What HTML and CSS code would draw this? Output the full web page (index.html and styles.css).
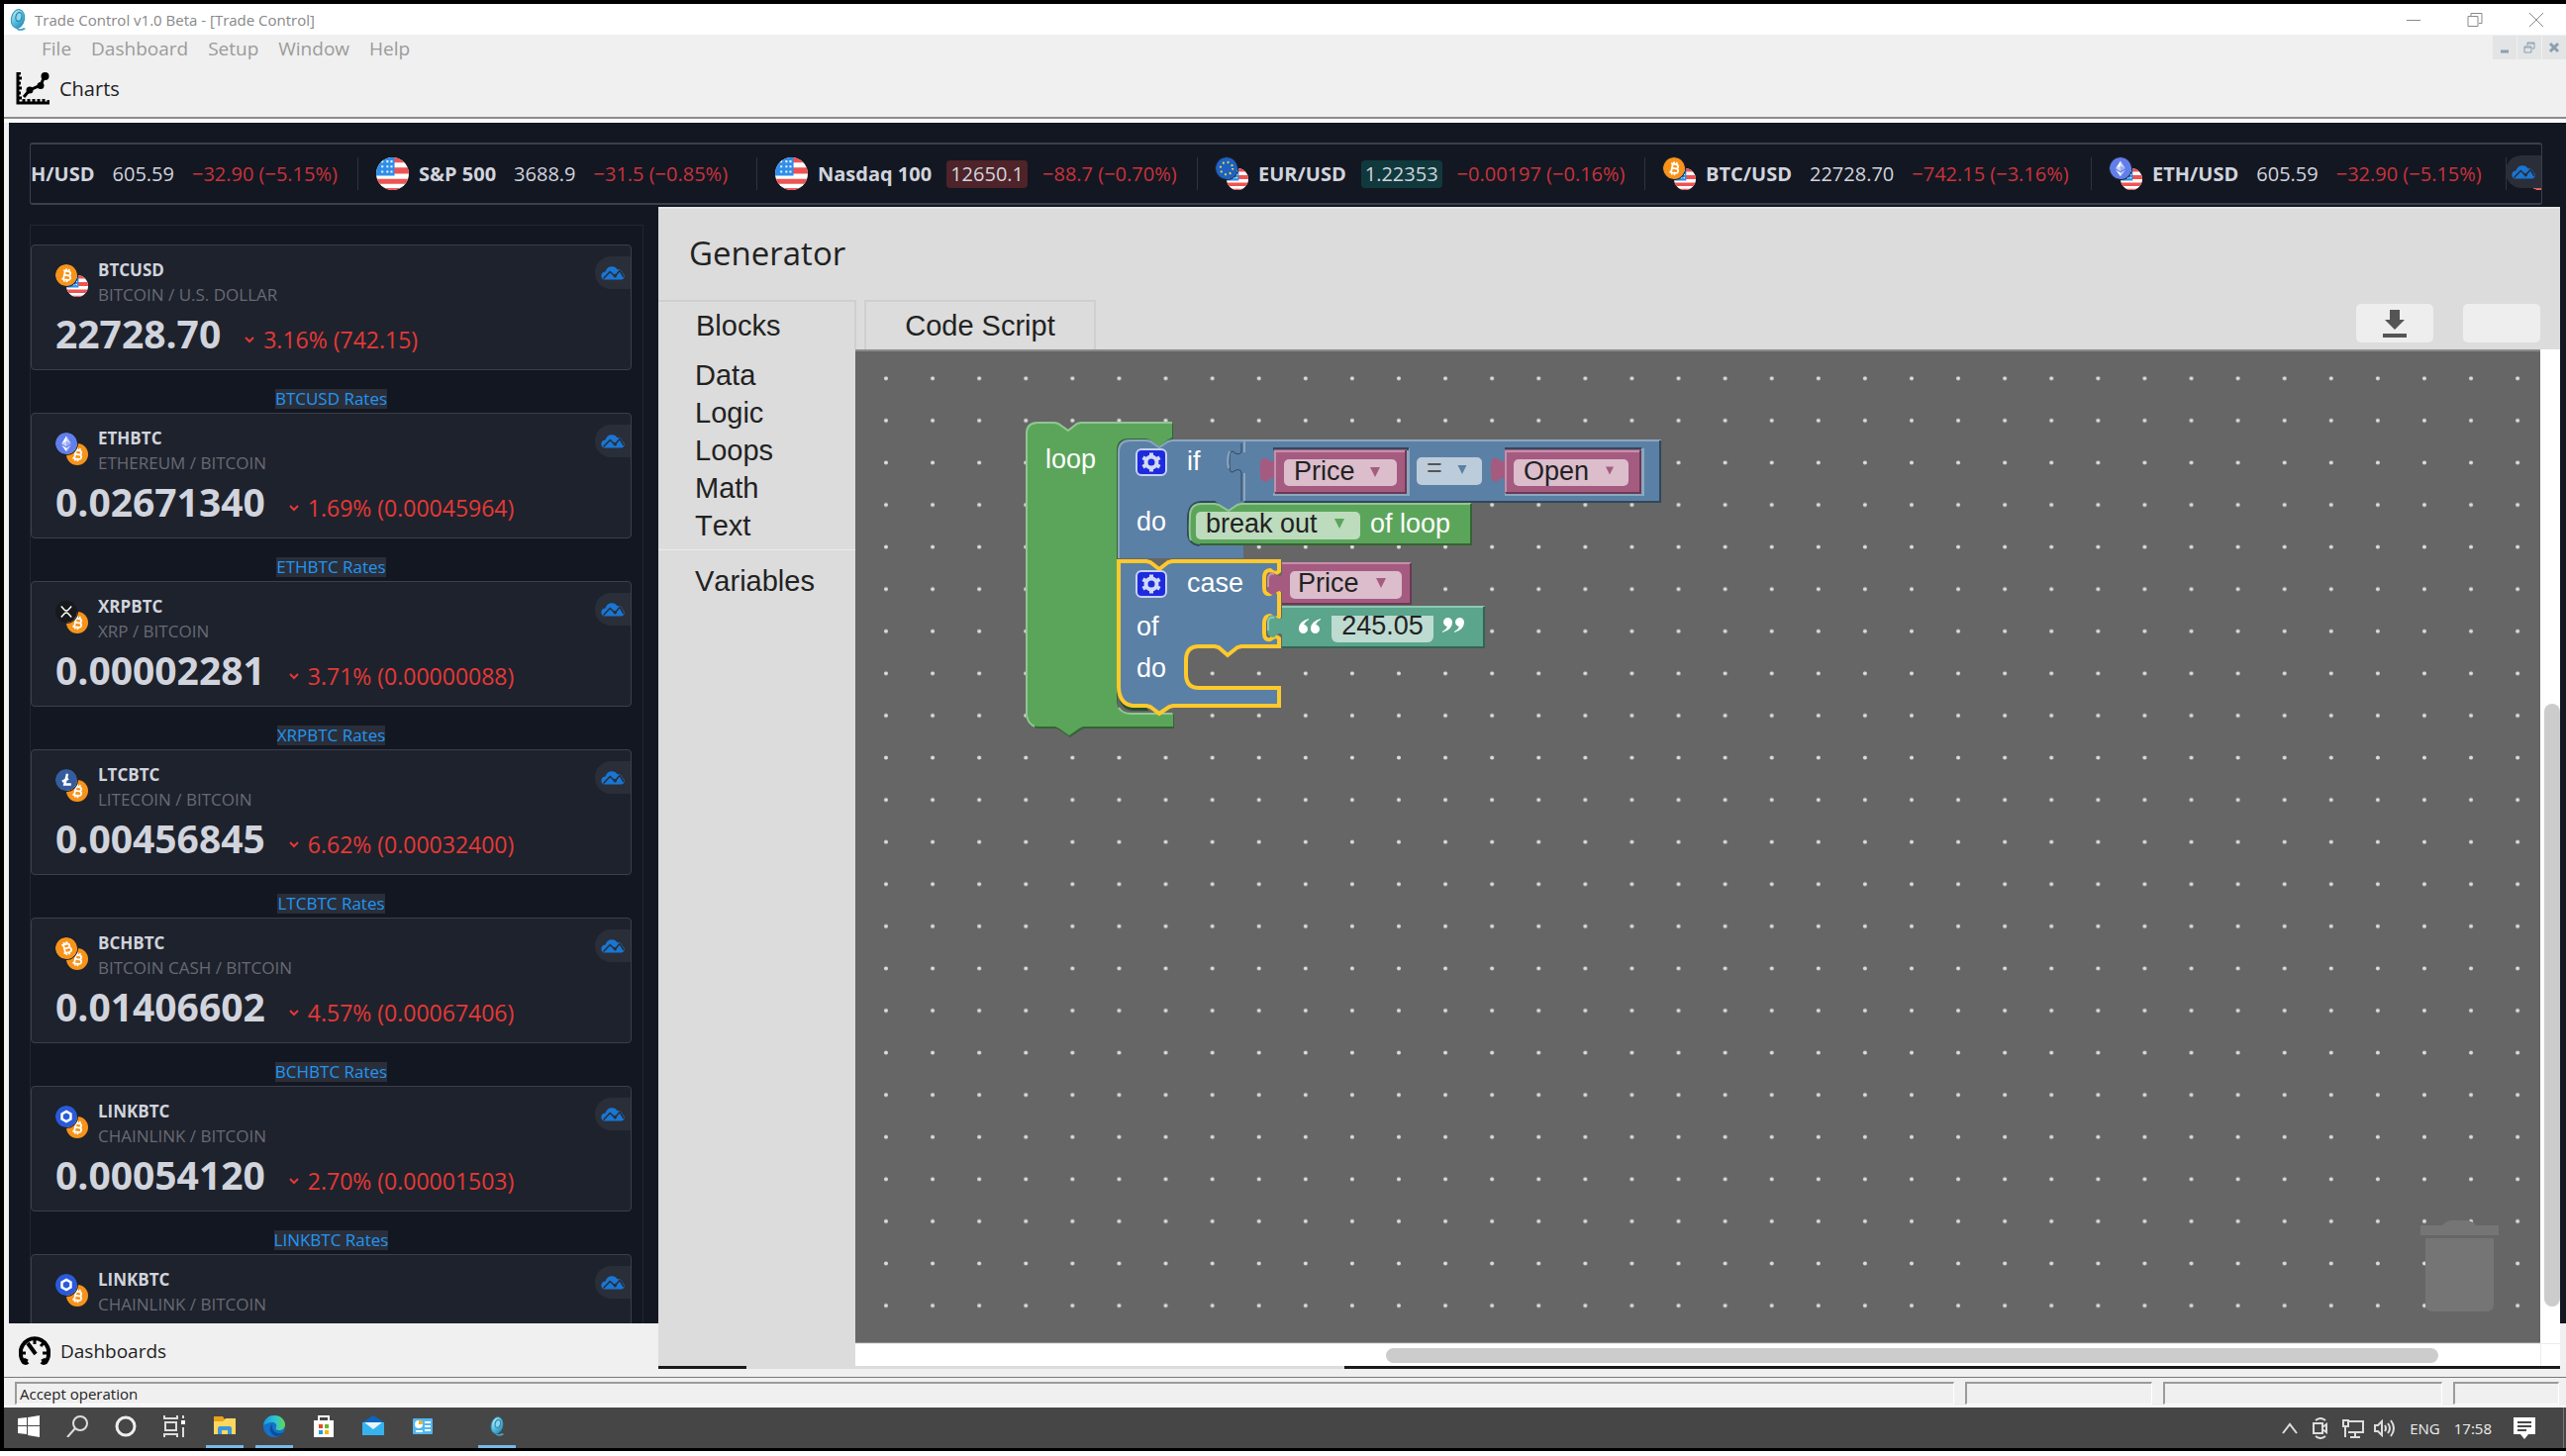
FILE: index.html
```html
<!DOCTYPE html>
<html lang="en">
<head>
<meta charset="utf-8">
<title>Trade Control v1.0 Beta - [Trade Control]</title>
<link rel="stylesheet" href="styles.css">
</head>
<body>
<svg class="defs" width="0" height="0" aria-hidden="true">
  <defs>
    <clipPath id="disc"><circle cx="16" cy="16" r="16"/></clipPath>
    <linearGradient id="shell" x1="0" y1="0" x2="1" y2="1"><stop offset="0" stop-color="#d4f3fb"/><stop offset=".5" stop-color="#5cc0e0"/><stop offset="1" stop-color="#1c80ad"/></linearGradient>
    <linearGradient id="edgeTop" x1="0" y1="0" x2="1" y2="0"><stop offset="0" stop-color="#1696e0"/><stop offset=".55" stop-color="#2fc4d0"/><stop offset="1" stop-color="#62d84e"/></linearGradient>
  </defs>
  <symbol id="us" viewBox="0 0 32 32"><g clip-path="url(#disc)"><path fill="#fff" d="M0 0h32v32H0z"/><path fill="#ef5350" d="M14 0h18v5H14zM14 10h18v6H14zM0 21h32v5H0zM0 30h32v2H0z"/><path fill="#2f8eea" d="M0 0h18v18H0z"/><path fill="#e8f3ff" d="M5 3h2v2H5zM10 3h2v2h-2zM14 3h2v2h-2zM5 8h2v2H5zM10 8h2v2h-2zM14 8h2v2h-2zM5 13h2v2H5zM10 13h2v2h-2zM14 13h2v2h-2z"/></g></symbol>
  <symbol id="eu" viewBox="0 0 32 32"><circle cx="16" cy="16" r="16" fill="#1e62c0"/><circle cx="16" cy="16" r="9" fill="none" stroke="#ffd54f" stroke-width="3" stroke-dasharray="2.4 4.67"/></symbol>
  <symbol id="btc" viewBox="0 0 32 32"><circle cx="16" cy="16" r="16" fill="#f7931a"/><path transform="rotate(12 16 16)" fill="none" stroke="#fff" stroke-width="2.6" d="M10.500 10h8a3 3 0 0 1 0 6h-5.500M13 16h6.500a3.200 3.200 0 0 1 0 6.500h-9M13 10v12.500M14.500 6.500v3M18.500 6.500v3M14.500 23v3M18.500 23v3"/></symbol>
  <symbol id="bch" viewBox="0 0 32 32"><circle cx="16" cy="16" r="16" fill="#f7931a"/><path transform="rotate(-14 16 16)" fill="none" stroke="#fff" stroke-width="2.6" d="M10.500 10h8a3 3 0 0 1 0 6h-5.500M13 16h6.500a3.200 3.200 0 0 1 0 6.500h-9M13 10v12.500M14.500 6.500v3M18.500 6.500v3M14.500 23v3M18.500 23v3"/></symbol>
  <symbol id="eth" viewBox="0 0 32 32"><circle cx="16" cy="16" r="16" fill="#627eea"/><path fill="#fff" d="M16 5l-7 11.500 7-3z"/><path fill="#c9d3f8" d="M16 5l7 11.500-7-3zM9 16.500l7-3v7.200z"/><path fill="#9badf2" d="M23 16.500l-7-3v7.200z"/><path fill="#fff" d="M9 18.500l7 4.200V28z"/><path fill="#c9d3f8" d="M23 18.500l-7 4.200V28z"/></symbol>
  <symbol id="xrp" viewBox="0 0 32 32"><circle cx="16" cy="16" r="16" fill="#17191c"/><path fill="none" stroke="#fff" stroke-width="2.200" d="M8.500 8l4.500 5q3 3 6 0l4.500-5M8.500 24l4.500-5q3-3 6 0l4.500 5"/></symbol>
  <symbol id="ltc" viewBox="0 0 32 32"><circle cx="16" cy="16" r="16" fill="#345d9d"/><path fill="none" stroke="#fff" stroke-width="3.600" d="M17.500 7l-4 15.500h9.500M10 18.500l9-4.500"/></symbol>
  <symbol id="link" viewBox="0 0 32 32"><circle cx="16" cy="16" r="16" fill="#2a5ada"/><path fill="none" stroke="#fff" stroke-width="3.600" d="M16 8.500l6.500 3.700v7.600L16 23.500l-6.500-3.700v-7.600z"/></symbol>
  <symbol id="cloud" viewBox="0 0 24 14"><path fill="#1976d2" d="M4 13.500a4 4 0 0 1-3.600-4.300C.6 7 2.500 5.600 4.500 5.600 5.500 2 8 .3 11 .3c2.600 0 4.400 1.200 5.600 3 3-.5 5 1.200 5.100 3.600 1.500.6 2.200 2 2.100 3.400-.1 1.800-1.500 3.200-3.400 3.200z"/><path fill="none" stroke="#2a2e39" stroke-width="1.600" d="M2.500 12.500l6.700-7 5 4.500 4.800-5.600M19 4l4 7"/><circle cx="14.300" cy="9.700" r="1.700" fill="#2a2e39"/></symbol>
  <symbol id="shellfish" viewBox="0 0 18 22"><ellipse cx="9" cy="10" rx="6.500" ry="9.500" fill="url(#shell)" stroke="#2c93b8" transform="rotate(12 9 10)"/><ellipse cx="10" cy="8" rx="3" ry="4.500" fill="#8fd6ec" stroke="#2784ab" stroke-width="1.200" transform="rotate(12 10 8)"/><path d="M5 18q5 4 10 1l2 1q-3 3-8 1.500z" fill="#4aa6c8"/></symbol>
  <symbol id="tri" viewBox="0 0 10 10"><path d="M0 0h10L5 10z"/></symbol>
  <symbol id="gear" viewBox="0 0 32 28"><rect x="1" y="1" width="30" height="26" rx="5" fill="#1d2be0" stroke="#c8d2f5" stroke-width="2"/><circle cx="16" cy="14" r="5.500" fill="none" stroke="#d2daf2" stroke-width="4"/><path stroke="#d2daf2" stroke-width="4" d="M16 4.500v3M16 20.500v3M7.500 9.200l2.600 1.500M24.500 9.200l-2.600 1.500M7.500 18.800l2.600-1.500M24.500 18.800l-2.600-1.500"/></symbol>
</svg>

<header class="titlebar">
  <svg class="app-icon" width="18" height="22"><use href="#shellfish"/></svg>
  <span class="title">Trade Control v1.0 Beta - [Trade Control]</span>
  <div class="win-buttons">
    <button aria-label="Minimize"><svg width="16" height="16" viewBox="0 0 16 16"><path d="M1 8.500h14"/></svg></button>
    <button aria-label="Restore"><svg width="16" height="16" viewBox="0 0 16 16"><path d="M1 4.500h10v10H1zM4 4V1.500h11v10h-3"/></svg></button>
    <button aria-label="Close"><svg width="16" height="16" viewBox="0 0 16 16"><path d="M1 1l14 14M15 1L1 15"/></svg></button>
  </div>
</header>

<nav class="menubar">
  <button>File</button><button>Dashboard</button><button>Setup</button><button>Window</button><button>Help</button>
  <div class="mdi">
    <button aria-label="Minimize child window"><svg width="12" height="12" viewBox="0 0 12 12"><path d="M2 10h8"/></svg></button>
    <button aria-label="Restore child window"><svg width="12" height="12" viewBox="0 0 12 12"><path class="thin" d="M1 5h7v6H1zM1 6h7M4 4V1h7v6H9M4 2h7"/></svg></button>
    <button aria-label="Close child window"><svg width="12" height="12" viewBox="0 0 12 12"><path d="M2 2l8 8M10 2l-8 8"/></svg></button>
  </div>
</nav>

<div class="toolbar">
  <button class="tool">
    <svg width="34" height="34" viewBox="0 0 34 34"><path fill="none" stroke="#000" stroke-width="3" d="M5 1H2v30h31v-3M2 6h4M2 11h3M2 16h4M2 21h3M2 26h4M8 30v-3M13 30v-3M18 30v-3M23 30v-3M28 30v-3"/><path fill="none" stroke="#000" stroke-width="3" d="M8 25l6-7 11-5 4-9"/><circle cx="14" cy="18" r="3.500"/><circle cx="25" cy="13.500" r="3.500"/><circle cx="29.500" cy="4" r="4"/></svg>
    Charts
  </button>
</div>

<main class="workspace">
  <section class="ticker-row">
    <div class="ticker">
      <div class="tick"><b>H/USD</b><span>605.59</span><em>−32.90 (−5.15%)</em></div>
      <div class="tick"><svg class="coin"><use href="#us"/></svg><b>S&amp;P 500</b><span>3688.9</span><em>−31.5 (−0.85%)</em></div>
      <div class="tick"><svg class="coin"><use href="#us"/></svg><b>Nasdaq 100</b><span class="pill down">12650.1</span><em>−88.7 (−0.70%)</em></div>
      <div class="tick"><span class="pair"><svg class="quote"><use href="#us"/></svg><svg class="base"><use href="#eu"/></svg></span><b>EUR/USD</b><span class="pill up">1.22353</span><em>−0.00197 (−0.16%)</em></div>
      <div class="tick"><span class="pair"><svg class="quote"><use href="#us"/></svg><svg class="base"><use href="#btc"/></svg></span><b>BTC/USD</b><span>22728.70</span><em>−742.15 (−3.16%)</em></div>
      <div class="tick"><span class="pair"><svg class="quote"><use href="#us"/></svg><svg class="base"><use href="#eth"/></svg></span><b>ETH/USD</b><span>605.59</span><em>−32.90 (−5.15%)</em></div>
      <div class="tick"><svg class="coin"><use href="#us"/></svg></div>
      <a class="badge" href="#" aria-label="Chart"><svg width="24" height="14"><use href="#cloud"/></svg></a>
    </div>
  </section>

  <aside class="rates">
    <div class="rates-list">
      <article class="card">
        <div class="card-head"><span class="pair"><svg class="quote"><use href="#us"/></svg><svg class="base"><use href="#btc"/></svg></span><div><h2>BTCUSD</h2><p>BITCOIN / U.S. DOLLAR</p></div></div>
        <div class="quote-line"><strong>22728.70</strong><svg class="fall"><path d="M1 1l4 4 4-4"/></svg><span>3.16% (742.15)</span></div>
        <a class="badge" href="#" aria-label="Chart"><svg width="24" height="14"><use href="#cloud"/></svg></a>
      </article>
      <div class="more"><a href="#">BTCUSD Rates</a></div>
      <article class="card">
        <div class="card-head"><span class="pair"><svg class="quote"><use href="#btc"/></svg><svg class="base"><use href="#eth"/></svg></span><div><h2>ETHBTC</h2><p>ETHEREUM / BITCOIN</p></div></div>
        <div class="quote-line"><strong>0.02671340</strong><svg class="fall"><path d="M1 1l4 4 4-4"/></svg><span>1.69% (0.00045964)</span></div>
        <a class="badge" href="#" aria-label="Chart"><svg width="24" height="14"><use href="#cloud"/></svg></a>
      </article>
      <div class="more"><a href="#">ETHBTC Rates</a></div>
      <article class="card">
        <div class="card-head"><span class="pair"><svg class="quote"><use href="#btc"/></svg><svg class="base"><use href="#xrp"/></svg></span><div><h2>XRPBTC</h2><p>XRP / BITCOIN</p></div></div>
        <div class="quote-line"><strong>0.00002281</strong><svg class="fall"><path d="M1 1l4 4 4-4"/></svg><span>3.71% (0.00000088)</span></div>
        <a class="badge" href="#" aria-label="Chart"><svg width="24" height="14"><use href="#cloud"/></svg></a>
      </article>
      <div class="more"><a href="#">XRPBTC Rates</a></div>
      <article class="card">
        <div class="card-head"><span class="pair"><svg class="quote"><use href="#btc"/></svg><svg class="base"><use href="#ltc"/></svg></span><div><h2>LTCBTC</h2><p>LITECOIN / BITCOIN</p></div></div>
        <div class="quote-line"><strong>0.00456845</strong><svg class="fall"><path d="M1 1l4 4 4-4"/></svg><span>6.62% (0.00032400)</span></div>
        <a class="badge" href="#" aria-label="Chart"><svg width="24" height="14"><use href="#cloud"/></svg></a>
      </article>
      <div class="more"><a href="#">LTCBTC Rates</a></div>
      <article class="card">
        <div class="card-head"><span class="pair"><svg class="quote"><use href="#btc"/></svg><svg class="base"><use href="#bch"/></svg></span><div><h2>BCHBTC</h2><p>BITCOIN CASH / BITCOIN</p></div></div>
        <div class="quote-line"><strong>0.01406602</strong><svg class="fall"><path d="M1 1l4 4 4-4"/></svg><span>4.57% (0.00067406)</span></div>
        <a class="badge" href="#" aria-label="Chart"><svg width="24" height="14"><use href="#cloud"/></svg></a>
      </article>
      <div class="more"><a href="#">BCHBTC Rates</a></div>
      <article class="card">
        <div class="card-head"><span class="pair"><svg class="quote"><use href="#btc"/></svg><svg class="base"><use href="#link"/></svg></span><div><h2>LINKBTC</h2><p>CHAINLINK / BITCOIN</p></div></div>
        <div class="quote-line"><strong>0.00054120</strong><svg class="fall"><path d="M1 1l4 4 4-4"/></svg><span>2.70% (0.00001503)</span></div>
        <a class="badge" href="#" aria-label="Chart"><svg width="24" height="14"><use href="#cloud"/></svg></a>
      </article>
      <div class="more"><a href="#">LINKBTC Rates</a></div>
      <article class="card">
        <div class="card-head"><span class="pair"><svg class="quote"><use href="#btc"/></svg><svg class="base"><use href="#link"/></svg></span><div><h2>LINKBTC</h2><p>CHAINLINK / BITCOIN</p></div></div>
        <a class="badge" href="#" aria-label="Chart"><svg width="24" height="14"><use href="#cloud"/></svg></a>
      </article>
    </div>
  </aside>

  <section class="generator">
    <header class="gen-head"><h1>Generator</h1></header>
    <div class="tabs">
      <button class="tab tab-blocks">Blocks</button>
      <button class="tab tab-code">Code Script</button>
      <div class="gen-actions">
        <button aria-label="Download"><svg width="24" height="28" viewBox="0 0 24 28"><path fill="#555" d="M7 0h10v10h5L12 20 2 10h5zM0 24h24v4H0z"/></svg></button>
        <button aria-label="Blank"></button>
      </div>
    </div>
    <div class="gen-body">
      <nav class="toolbox">
        <ul>
          <li><button>Data</button></li><li><button>Logic</button></li><li><button>Loops</button></li><li><button>Math</button></li><li><button>Text</button></li>
        </ul>
        <ul class="vars"><li><button>Variables</button></li></ul>
      </nav>
      <div class="canvas">
        <svg class="grid-dots" width="100%" height="100%"><defs><pattern id="dots" patternUnits="userSpaceOnUse" x="7.500" y="6" width="47.090" height="42.580"><circle cx="23.500" cy="21.300" r="2" fill="#dcdcdc"/></pattern></defs><rect width="100%" height="100%" fill="url(#dots)"/></svg>
        <svg class="trash" width="80" height="92" viewBox="0 0 80 92"><path fill="#757575" d="M0 5h22q4-5 10-5h14q6 0 10 5h23v10H0zM5 18h69v67q0 7-7 7H12q-7 0-7-7z"/></svg>
        <div class="blocks">
          <svg width="700" height="360" viewBox="0 0 700 360">
            <!-- outer loop, with its shade one step down and right -->
            <path fill="#346434" transform="translate(1 2)" d="M16 38q0-12 12-12h17l4 1 10 7 9-7 4-1h92v16l-4 2-9 7-10-7-3-1h-18q-12 0-12 12v252q0 13 13 13h44v14H74l-4 2-10 7-10-7-4-2H30q-14 0-14-14z"/>
            <path fill="#5ba55b" d="M16 38q0-12 12-12h17l4 1 10 7 9-7 4-1h92v16l-4 2-9 7-10-7-3-1h-18q-12 0-12 12v252q0 13 13 13h44v14H74l-4 2-10 7-10-7-4-2H30q-14 0-14-14z"/>
            <path class="lite" stroke="#92c592" d="M17 322V38q0-11 12-11h16l4 1 10 7 9-7 4-1h92M17 322q1 9 8 12M110 315q4 6 12 6h42"/>
            <!-- if / do -->
            <path fill="#5b80a5" d="M109 57q0-13 13-13h16l4 1 9 7 9-7 4-1h494v63H236v57H109z"/>
            <path class="lite" stroke="#8ca6c0" d="M110 164V57q0-12 12-12h16l4 1 9 6 9-6 4-1h494"/>
            <path class="lite" stroke="#31475c" d="M657 45v62H237"/>
            <path class="lite" stroke="#8ca6c0" d="M237 46v11M237 78v28"/>
            <path class="lite shade" stroke="#31475c" d="M234 48v9q-3 4-9-1-3 0-3 6v8q0 8 3 7 7-5 9 0v29"/>
            <path class="lite" stroke="#8ca6c0" d="M222 56q-3 8-1 17"/>
            <path fill="#8ca6c0" d="M401 53h3v48H266v-3h135zM638 53h3v48H500v-3h138z"/>
            <path fill="#31475c" d="M266 52h137v3H266zM500 52h138v3H500z"/>
            <g fill="#a55b80"><path d="M267 54h134v44H267V84q-3-3-8 3-6 0-6-7V69q0-8 6-6 5 5 8 2zM500 54h138v44H500V84q-3-3-8 3-6 0-6-7V69q0-8 6-6 5 5 8 2z"/></g>
            <path class="lite" stroke="#c58fab" d="M268 97V56h132M501 97V56h136"/>
            <path class="lite" stroke="#693a52" d="M400 55v43H268M637 55v43H501"/>
            <g fill="#dbbdcc"><rect x="277" y="64" width="114" height="27" rx="5"/><rect x="509" y="64" width="116" height="27" rx="5"/></g>
            <rect x="411" y="62" width="66" height="28" rx="5" fill="#bdccdb"/>
            <!-- break out -->
            <path fill="#31475c" d="M179 124q0-17 14-18h14l14 10-30 36q-12-2-12-14z"/>
            <path fill="#5ba55b" d="M181 122q0-14 12-14h14l4 1 10 7 9-7 4-1h232v42H193q-12 0-12-12z"/>
            <path class="lite" stroke="#92c592" d="M183 146q-2-4-1-24 0-13 12-13h13l4 1 10 6 9-6 4-1h232"/>
            <path class="lite" stroke="#346434" d="M466 109v41H192"/>
            <rect x="188" y="117" width="166" height="28" rx="5" fill="#bddbbd"/>
            <!-- case -->
            <path fill="#24502a" d="M110 300q0 16 14 18h16l-2-6z"/>
            <path fill="#5b80a5" stroke="#fdc92c" stroke-width="4" d="M110 167h28l4 1 9 7 9-7 4-1h108v10q-3 4-9-1-6 0-6 8v10q0 7 6 6 6-5 9-1v24q-3 4-9-1-6 0-6 8v10q0 7 6 6 6-5 9-1v8h-38l-4 1-10 8-9-8-4-1h-16q-13 0-13 14v14q0 14 13 14h81v18H165l-4 1-10 7-9-7-4-1h-14q-14-2-14-20z"/>
            <path fill="#a55b80" d="M275 168h131v42H275v-12q-3-3-8 3-7 0-7-7v-9q0-8 7-6 5 5 8 2z"/>
            <path class="lite" stroke="#c58fab" d="M275 169h130M261 193v-8q0-6 6-5"/>
            <path class="lite" stroke="#693a52" d="M405 169v41H275"/>
            <rect x="283" y="177" width="113" height="28" rx="5" fill="#dbbdcc"/>
            <path fill="#5ba58c" d="M275 212h205v42H275v-13q-3-3-8 3-7 0-7-7v-9q0-8 7-6 5 5 8 2z"/>
            <path class="lite" stroke="#8cc9b5" d="M275 213h204M261 237v-8q0-6 6-5"/>
            <path class="lite" stroke="#346454" d="M479 213v41H275"/>
            <path fill="#fff" d="M302 225q-10 3-10 10a4.500 4.500 0 1 0 5-4q1-3 5-5zM314 225q-10 3-10 10a4.500 4.500 0 1 0 5-4q1-3 5-5zM437 239q10-3 10-10a4.500 4.500 0 1 0-5 4q-1 3-5 5zM449 239q10-3 10-10a4.500 4.500 0 1 0-5 4q-1 3-5 5z"/>
            <use href="#gear" x="127" y="53" width="32" height="28"/>
            <use href="#gear" x="127" y="176" width="32" height="28"/>
            <g fill="#a55b80"><use href="#tri" x="364" y="72" width="10" height="10"/><use href="#tri" x="602" y="71" width="8" height="9"/><use href="#tri" x="370" y="184" width="10" height="10"/></g>
            <use href="#tri" x="452" y="70" width="10" height="9" fill="#5b80a5"/>
            <use href="#tri" x="328" y="124" width="10" height="10" fill="#5ba55b"/>
            <g class="block-text"><text x="36" y="73">loop</text><text x="179" y="75">if</text><text x="128" y="136">do</text><text x="364" y="138">of loop</text><text x="179" y="198">case</text><text x="128" y="242">of</text><text x="128" y="284">do</text></g>
          </svg>
          <select class="field field-left" aria-label="Left operand"><option>Price</option></select>
          <select class="field field-op" aria-label="Operator"><option>=</option></select>
          <select class="field field-right" aria-label="Right operand"><option>Open</option></select>
          <select class="field field-flow" aria-label="Flow"><option>break out</option></select>
          <select class="field field-case" aria-label="Case value"><option>Price</option></select>
          <input class="field field-value" aria-label="Text value" value="245.05">
        </div>
      </div>
      <div class="vscroll"><i></i></div>
      <div class="hscroll"><i></i></div>
      <div class="corner"></div>
    </div>
  </section>
  <div class="edge"></div>

  <div class="dashboards">
    <button class="tool">
      <svg width="32" height="30" viewBox="0 0 32 30"><path fill="none" stroke="#000" stroke-width="4" d="M9 26a3 3 0 0 1-5-1C1 20 1 13 4 9 10 0 22 0 28 9c3 4 3 11 0 16a3 3 0 0 1-5 1"/><path stroke="#000" stroke-width="3" d="M16 2v6M22 10l3-3M24 17h6M2 17h5M23 25l4-2M5 23l4 2"/><path stroke="#000" stroke-width="4" d="M9 7l8 11"/></svg>
      Dashboards
    </button>
  </div>
</main>

<footer class="statusbar"><span>Accept operation</span><span></span><span></span><span></span></footer>

<nav class="taskbar">
  <div class="apps">
    <button aria-label="Start"><svg width="22" height="22" viewBox="0 0 22 22"><path fill="#fff" d="M0 3l9-1v8H0zM10 2l12-2v10H10zM0 11h9v8l-9-1zM10 11h12v11l-12-2z"/></svg></button>
    <button aria-label="Search"><svg width="22" height="22" viewBox="0 0 22 22"><g fill="none" stroke="#ddd" stroke-width="2"><circle cx="14" cy="8" r="7"/><path d="M9 13l-8 9"/></g></svg></button>
    <button aria-label="Cortana"><svg width="22" height="22" viewBox="0 0 22 22"><circle cx="11" cy="11" r="9" fill="none" stroke="#eee" stroke-width="3"/></svg></button>
    <button aria-label="Task View"><svg width="22" height="22" viewBox="0 0 22 22"><g fill="none" stroke="#ddd" stroke-width="2"><path d="M1 0v3h13V0M1 22v-3h13v3M2 7h11v8H2zM20 0v3M20 12v10"/><path stroke="#fff" stroke-width="4" d="M20 5v4"/></g></svg></button>
    <button class="open files" aria-label="File Explorer"><svg width="22" height="22" viewBox="0 0 22 22"><path fill="#e8a317" d="M0 1h9l2 3v6H0z"/><path fill="#ffd75e" d="M0 6h9l3-3h10v16H0z"/><path fill="#3c97dd" d="M4 19v-6q0-2 2-2h10q2 0 2 2v6h-4v-4H8v4z"/></svg></button>
    <button class="open" aria-label="Edge"><svg width="22" height="22" viewBox="0 0 22 22"><circle cx="11" cy="11" r="11" fill="#1472c8"/><path fill="url(#edgeTop)" d="M0 10C1 3 6 0 11 0c7 0 11 5 11 9 0 4-3 6-6 6-3 0-4-1-3-3 1-3-1-5-4-5-4 0-7 2-9 3z"/><path fill="#0c4f9a" d="M9 9c-5 4-1 12 5 12 3 0 5-2 7-4-6 3-13 0-12-8z"/></svg></button>
    <button aria-label="Store"><svg width="20" height="22" viewBox="0 0 20 22"><path fill="none" stroke="#fff" stroke-width="2" d="M5 6V1h10v5"/><path fill="#fff" d="M0 5h20v17H0z"/><path fill="#e84a27" d="M5 9h4v4H5z"/><path fill="#6cb52d" d="M11 9h4v4h-4z"/><path fill="#1f9ce0" d="M5 15h4v4H5z"/><path fill="#f8b50f" d="M11 15h4v4h-4z"/></svg></button>
    <button aria-label="Mail"><svg width="22" height="22" viewBox="0 0 22 22"><path fill="#0b66bd" d="M0 7l11-7 11 7v4H0z"/><path fill="#35b3ee" d="M0 7h22v13H0z"/><path fill="#e8f4fc" d="M2 7h18l-9 7z"/></svg></button>
    <button aria-label="Control Panel"><svg width="20" height="18" viewBox="0 0 20 18"><rect width="20" height="16" y="1" rx="1" fill="#52b7f0"/><circle cx="6" cy="7" r="4" fill="#fff"/><path fill="#f6b01e" d="M6 7V3a4 4 0 0 1 4 4z"/><path stroke="#fff" stroke-width="2" d="M12 5h6M12 9h6M3 14h7M12 13h6"/></svg></button>
    <button class="open trade" aria-label="Trade Control"><svg width="16" height="20"><use href="#shellfish"/></svg></button>
  </div>
  <div class="tray">
    <svg width="18" height="12" viewBox="0 0 18 12"><path d="M2 11l7-9 7 9"/></svg>
    <svg width="16" height="22" viewBox="0 0 16 22"><path d="M1 6h9v10H1zM10 10l4-3v8l-4-3M3 3q5-4 10 0M3 19q5 4 10 0"/></svg>
    <svg class="net" width="22" height="20" viewBox="0 0 22 20"><path d="M6 3h15v11H6M13 14v5M8 19h10M1 2h5v6H1zM3 8v11"/></svg>
    <svg width="22" height="18" viewBox="0 0 22 18"><path d="M1 6h3l4-4v14l-4-4H1zM11 6q2 3 0 6M14 4q4 5 0 10M17 1q6 8 0 16"/></svg>
    <span>ENG</span>
    <span>17:58</span>
    <svg class="note" width="22" height="22" viewBox="0 0 22 22"><path fill="#fff" stroke="none" d="M0 0h22v17h-7l-4 5-4-5H0z"/><path stroke="#464646" d="M4 5h14M4 9h14M4 13h9"/></svg>
  </div>
</nav>
</body>
</html>
```
FILE: styles.css
```css
* { box-sizing: border-box; }

body {
  margin: 0;
  height: 100vh;
  display: flex;
  flex-direction: column;
  overflow: hidden;
  padding: 4px 0 3px 4px;
  border-bottom: 5px solid #fff;
  background: #000;
  color: #222;
  font-family: "Open Sans", "Noto Sans", sans-serif;
  font-size: 20px;
}

button {
  margin: 0;
  padding: 0;
  border: 0;
  background: none;
  color: inherit;
  font: inherit;
}

h1, h2, p, ul { margin: 0; padding: 0; font-weight: 400; }
li { list-style: none; }
svg { display: block; flex: none; }
.defs { position: absolute; }

/* window chrome */
.titlebar {
  display: flex;
  align-items: center;
  height: 31px;
  flex: none;
  padding-left: 5px;
  background: #fff;
}
.title { margin-left: 8px; font-size: 15px; line-height: 24px; color: #888; }
.win-buttons { display: flex; margin-left: auto; margin-right: -1px; }
.win-buttons button { display: flex; width: 62px; justify-content: center; }
.win-buttons svg { fill: none; stroke: #8a8a8a; }

.menubar {
  display: flex;
  gap: 20px;
  height: 31px;
  flex: none;
  padding-left: 38px;
  background: #f0f0f0;
  color: #9b9b9b;
  font-size: 19px;
  line-height: 28px;
}
.menubar > button { height: 28px; }
.mdi { display: flex; gap: 1px; height: 24px; margin: 1px 0 0 auto; }
.mdi button { display: flex; align-items: center; justify-content: center; width: 24px; background: #e2e4e6; }
.mdi svg { fill: none; stroke: #8c9fae; stroke-width: 3; }
.mdi .thin { stroke-width: 1; }

.toolbar {
  height: 58px;
  flex: none;
  padding: 7px 12px 0;
  background: #f0f0f0;
  border-bottom: 4px solid #fafafa;
  box-shadow: inset 0 -2px 0 #8c8c8c;
}
.tool { display: flex; align-items: center; gap: 10px; font-size: 20px; line-height: 32px; }

/* main area */
.workspace {
  display: grid;
  grid-template-columns: 656px minmax(0, 1fr) 6px;
  grid-template-rows: 85px minmax(0, 1fr) 54px;
  flex: 1;
  min-height: 0;
  padding-left: 5px;
  background: #f0f0f0;
}
.ticker-row { grid-column: 1 / 4; padding: 20px 24px 2px 21px; background: #131722; }
.ticker {
  position: relative;
  display: grid;
  grid-template-columns: 330px 403px 445px 452px 451px 419px 1fr;
  align-items: center;
  height: 63px;
  overflow: hidden;
  border: 1px solid #3b3f4b;
  border-width: 2px 1px;
  border-radius: 3px;
  color: #d1d4dc;
}
.tick {
  display: flex;
  align-items: center;
  gap: 18px;
  height: 33px;
  min-width: 0;
  padding-left: 18px;
  border-left: 1px solid #2f3340;
  font-size: 20px;
  line-height: 28px;
  white-space: nowrap;
}
.tick:first-child { padding-left: 0; border: 0; }
.tick b { font-weight: 700; }
.tick em { font-style: normal; color: #c8333a; }
.coin { width: 33px; height: 33px; }
.coin + b, .pair + b { margin-left: -8px; }
.pill { margin: 0 -3px; padding: 0 4px; border-radius: 4px; }
.down { background: #4e2329; }
.up { background: #10393d; }

.pair { position: relative; width: 33px; height: 33px; flex: none; }
.pair svg { position: absolute; width: 22px; height: 22px; }
.pair .quote { right: 0; bottom: 0; }
.pair .base { top: 0; left: 0; border-radius: 50%; box-shadow: 0 0 0 1px #1e222d; }

.badge {
  position: absolute;
  right: 0;
  top: 11px;
  display: flex;
  align-items: center;
  width: 36px;
  height: 33px;
  padding-left: 6px;
  border-radius: 16px 0 0 16px;
  background: #2a2e39;
}

/* rate cards */
.rates { min-height: 0; overflow: hidden; padding: 18px 15px 0 21px; background: #131722; }
.rates-list { padding: 19px 11px 0 0; border: 1px solid #222631; border-bottom: 0; }
.card {
  position: relative;
  height: 127px;
  padding: 13px 24px 0;
  border: 1px solid #3b3f4b;
  border-radius: 4px;
  background: #1e222d;
}
.card-head { display: flex; gap: 10px; }
.card-head .pair { margin-top: 6px; }
.card-head h2 { font-size: 17px; line-height: 24px; font-weight: 700; color: #d1d4dc; }
.card-head p { font-size: 17px; line-height: 26px; color: #676a74; }
.quote-line { display: flex; align-items: baseline; margin-top: 4px; color: #e53935; font-size: 23px; line-height: 44px; }
.quote-line strong { font-size: 39px; font-weight: 700; color: #d1d4dc; }
.fall { width: 10px; height: 12px; margin: 0 9px 0 24px; fill: none; stroke: #e53935; stroke-width: 2; }
.more { height: 43px; padding-top: 19px; text-align: center; font-size: 17px; line-height: 20px; }
.more a { display: inline-block; background: #2a2e39; color: #2196f3; text-decoration: none; }

.edge { background: #131722; }
.dashboards { grid-row: 3; padding: 12px 0 0 10px; }
.dashboards .tool { font-size: 19px; }

/* block editor */
.generator {
  grid-column: 2;
  grid-row: 2 / 4;
  display: flex;
  flex-direction: column;
  min-height: 0;
  margin-bottom: 8px;
  background: #dcdcdc;
  font-family: "Liberation Sans", Arial, sans-serif;
}
.gen-head { padding: 25px 31px 0; height: 94px; border-top: 2px solid #e6e6e6; }
.gen-head h1 { font: 33px/40px "Open Sans", sans-serif; }
.tabs { display: flex; height: 50px; font-size: 29px; line-height: 48px; }
.tab { border: 2px solid #cfcfcf; border-bottom: 0; border-left: 0; text-align: left; }
.tab-blocks { width: 200px; padding-left: 38px; }
.tab-code { width: 234px; margin-left: 8px; border-left: 2px solid #cfcfcf; text-align: center; }
.gen-actions { display: flex; gap: 30px; margin: 4px 20px 7px auto; }
.gen-actions button { display: flex; width: 78px; align-items: center; justify-content: center; border-radius: 5px; background: #eee; }

.gen-body {
  display: grid;
  grid-template-columns: 199px minmax(0, 1fr) 20px;
  grid-template-rows: minmax(0, 1fr) 23px;
  flex: 1;
  min-height: 0;
  border-bottom: 3px solid;
  border-image: linear-gradient(90deg, #1a1a1a 4.7%, #dcdcdc 4.7%, #dcdcdc 36.1%, #1a1a1a 36.1%) 1;
  border-image-width: 0 0 3px;
}
.toolbox { grid-row: 1 / 3; padding-top: 7px; font-size: 29px; line-height: 38px; font-kerning: none; }
.toolbox button { display: block; padding-left: 37px; }
.vars { margin-top: 5px; padding-top: 12px; border-top: 1px solid #ececec; }

.canvas { position: relative; overflow: hidden; border: 1px solid #8a8a8a; border-width: 2px 0 1px; background: #666; }
.grid-dots { position: absolute; inset: 0; }
.trash { position: absolute; right: 41px; bottom: 31px; }
.blocks { position: absolute; left: 156px; top: 45px; width: 700px; height: 360px; }
.lite { fill: none; stroke-width: 2; }
.shade { stroke-width: 1; }
.block-text { fill: #fff; font-size: 27px; }

.field {
  position: absolute;
  height: 32px;
  padding: 0;
  border: 0;
  background: transparent;
  appearance: none;
  outline: 0;
  color: #222;
  font: 27px/32px "Liberation Sans", Arial, sans-serif;
}
.field-left { left: 277px; top: 60px; width: 114px; padding-left: 10px; }
.field-op { left: 411px; top: 57px; width: 66px; padding-left: 10px; color: #555; }
.field-right { left: 509px; top: 60px; width: 116px; padding-left: 10px; }
.field-flow { left: 188px; top: 113px; width: 166px; padding-left: 10px; }
.field-case { left: 283px; top: 173px; width: 113px; padding-left: 8px; }
.field-value { left: 325px; top: 216px; width: 103px; height: 33px; background: none; text-align: center; }

.blocks input.field-value { background: linear-gradient(#bddbd1, #bddbd1) no-repeat 0 6px / 100% 27px; border-radius: 6px; }

.vscroll, .hscroll, .corner { background: #fff; }
.vscroll { padding: 358px 0 18px 4px; }
.vscroll i { display: block; height: calc(100% - 19px); border-radius: 8px; background: #ccc; }
.hscroll { display: flex; justify-content: flex-end; padding: 4px 103px 3px 0; border-top: 1px solid #ececec; }
.hscroll i { width: 66.5%; border-radius: 8px; background: #ccc; }
.corner { border: 1px solid #ececec; border-width: 1px 0 0 1px; }

/* status bar */
.statusbar {
  display: grid;
  grid-template-columns: minmax(0, 1957fr) minmax(0, 189fr) minmax(0, 282fr) minmax(0, 107fr);
  gap: 11px;
  height: 31px;
  flex: none;
  padding: 4px 7px 4px 11px;
  border-top: 1px solid #777;
  border-bottom: 2px solid #fff;
  background: #f0f0f0;
  font-size: 15px;
  line-height: 20px;
}
.statusbar span { padding-left: 3px; border: 1px solid #fff; border-width: 2px 1px 1px 2px; border-top-color: #9b9b9b; border-left-color: #9b9b9b; }

/* taskbar */
.taskbar { display: flex; justify-content: space-between; height: 41px; flex: none; background: #464646; }
.apps { display: flex; }
.apps button { display: flex; align-items: center; justify-content: center; width: 38px; margin: 0 6px; border-bottom: 3px solid transparent; }
.apps button:nth-child(-n+4) { width: 37px; }
.apps .open { border-color: #76b9ed; }
.apps .files { margin-left: 8px; }
.apps .trade { margin-left: 31px; }
.tray { display: flex; align-items: center; gap: 14px; margin-right: 2px; padding-right: 28px; border-right: 1px solid #777; color: #eee; font-size: 15px; line-height: 24px; }
.tray svg { fill: none; stroke: #ddd; stroke-width: 2; }
.tray .net { margin-right: -4px; }
.tray .note { margin-left: 8px; }
```
